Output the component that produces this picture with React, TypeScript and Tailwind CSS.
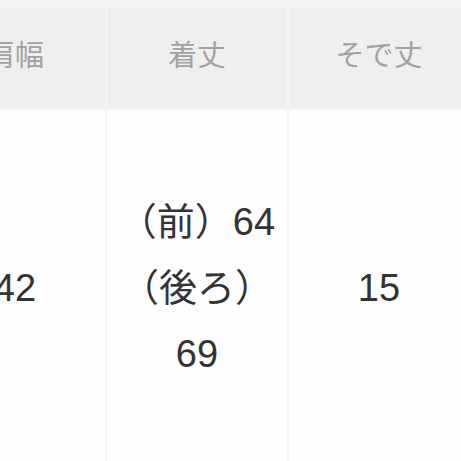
export default function App() {
  const font = { fontFamily: '"Liberation Sans", "Noto Sans CJK JP", sans-serif' };

  return (
    <div
      className="w-[461px] h-[461px] overflow-hidden bg-[#f5f5f5] pt-[8px]"
      style={font}
    >
      <div className="ml-[-75px] grid grid-cols-[180px_180px_180px] grid-rows-[100px_360px] gap-[2px]">
        {/* header */}
        <div className="bg-[#efefef] flex items-center justify-center pb-[4px] text-[29px] leading-[40px] text-[#a2a2a2]">
          肩幅
        </div>
        <div className="bg-[#efefef] flex items-center justify-center pb-[4px] text-[29px] leading-[40px] text-[#a2a2a2]">
          着丈
        </div>
        <div className="bg-[#efefef] flex items-center justify-center pb-[4px] text-[29px] leading-[40px] text-[#a2a2a2]">
          そで丈
        </div>

        {/* body */}
        <div className="bg-[#fefefe] flex items-center justify-center pb-[4px] text-[38px] leading-[66px] text-[#333333]">
          42
        </div>
        <div className="bg-[#fefefe] flex flex-col items-center justify-center pb-[4px] text-[38px] leading-[66px] text-[#333333]">
          <div>（前）64</div>
          <div>（後ろ）</div>
          <div>69</div>
        </div>
        <div className="bg-[#fefefe] flex items-center justify-center pb-[4px] text-[38px] leading-[66px] text-[#333333]">
          15
        </div>
      </div>
    </div>
  );
}
